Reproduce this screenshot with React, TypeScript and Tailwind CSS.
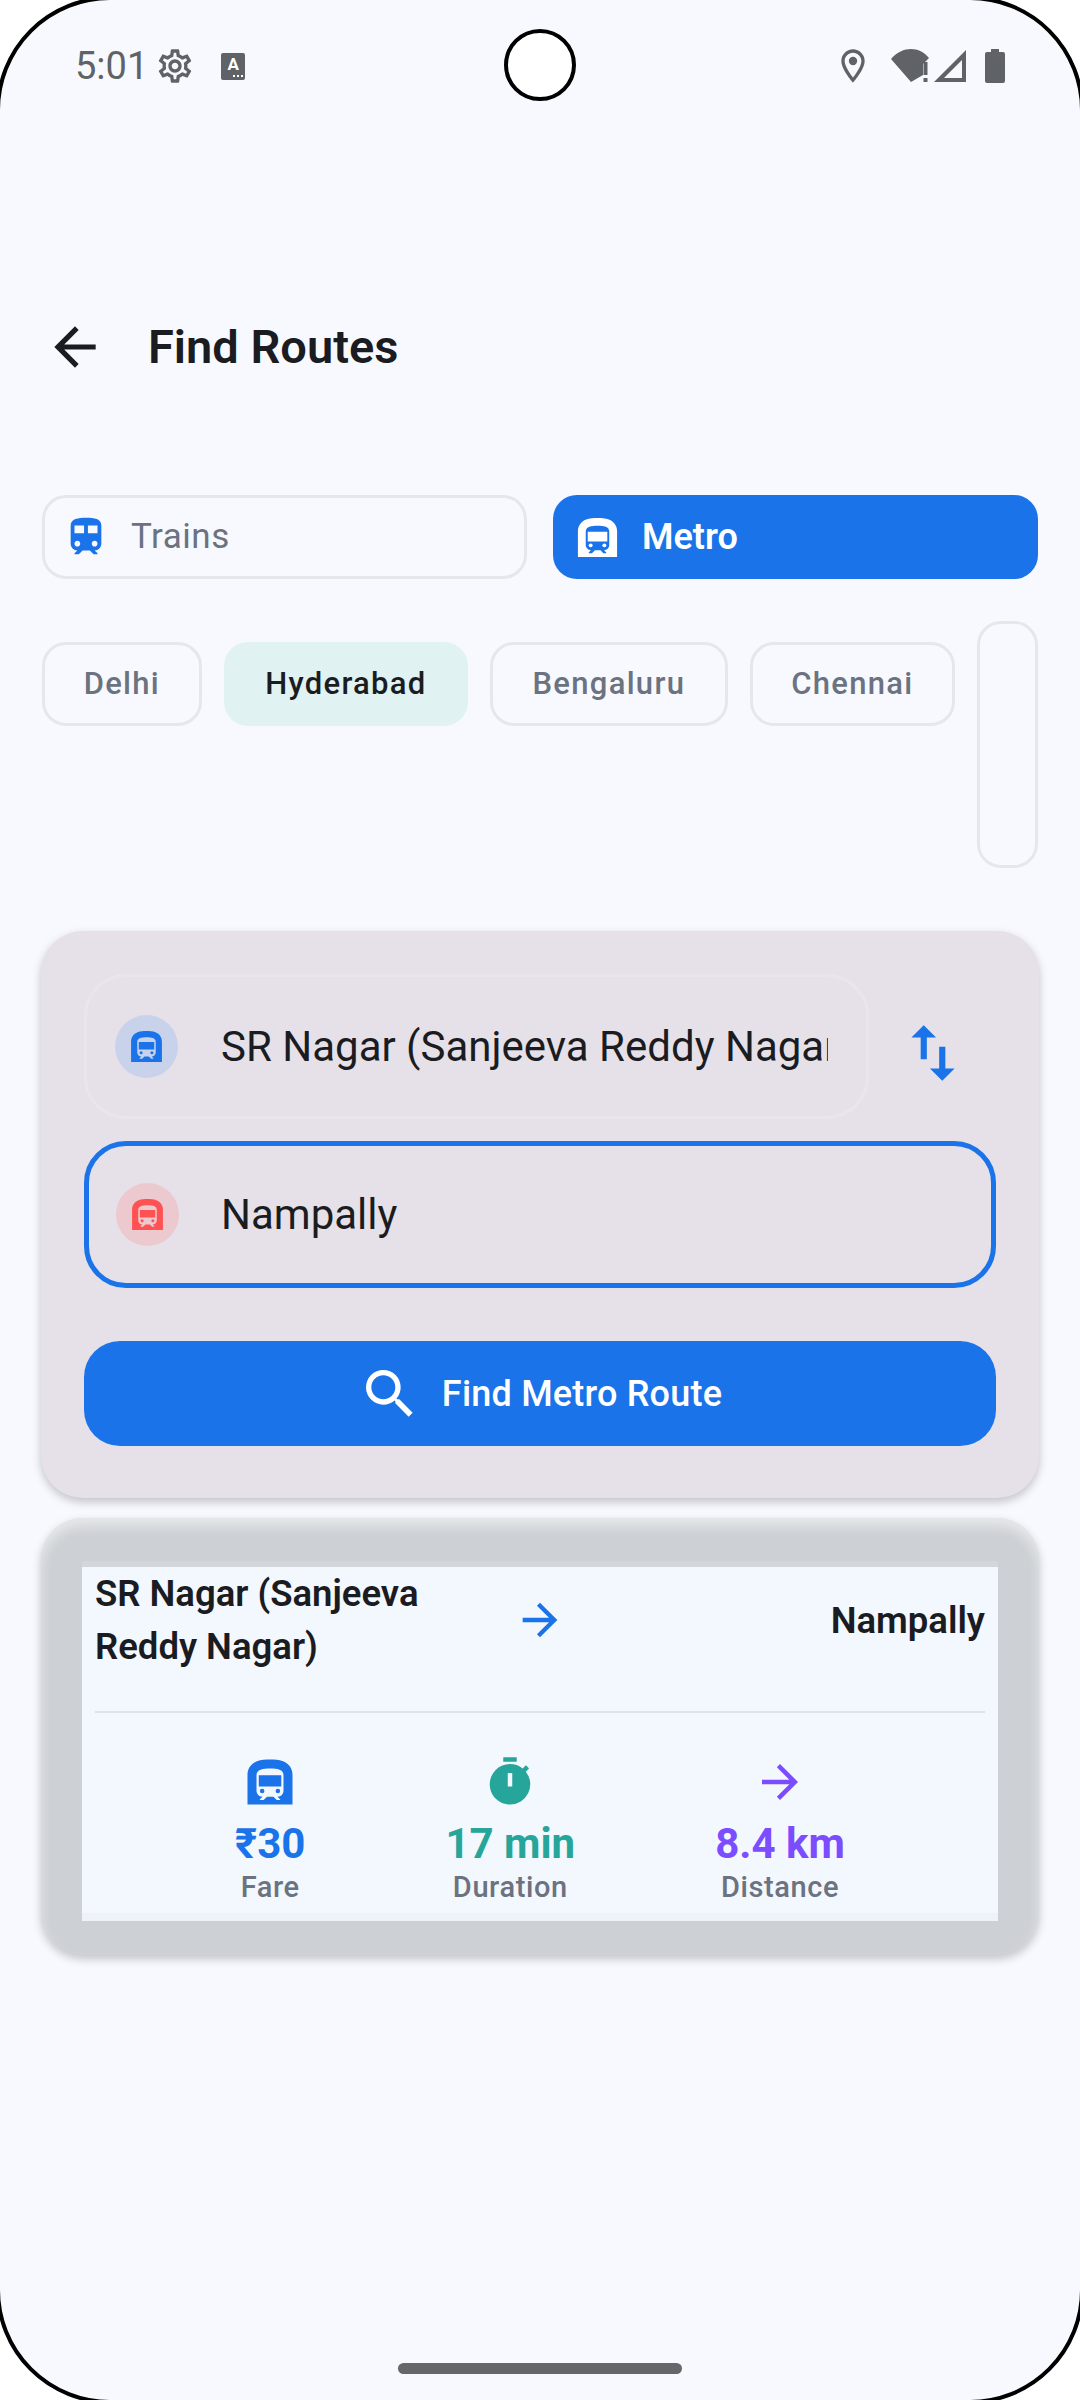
import { MdArrowBack, MdArrowForward, MdOutlineLocationOn, MdOutlineSettings, MdSearch, MdSubway, MdSwapVert, MdTimer, MdTrain } from "react-icons/md";

const CITIES = [
  { name: "Delhi", width: "w-[160px]" },
  { name: "Hyderabad", width: "w-[245px]", active: true },
  { name: "Bengaluru", width: "w-[238px]" },
  { name: "Chennai", width: "w-[206px]" },
];

function StatusBar() {
  return (
    <div className="relative flex h-[132px] items-center justify-between pl-[75px] pr-[75px] text-[#5f6368]">
      <div className="flex items-center">
        <span className="text-[38px] leading-none">5:01</span>
        <MdOutlineSettings className="ml-[7px] text-[40px]" />
        <div className="relative ml-[26px] h-[27px] w-[24px] rounded-[2px] bg-[#5f6368] text-center text-[17px] font-bold leading-[22px] text-white">
          A
          <span className="absolute bottom-[3px] right-[2px] h-[2px] w-[10px] border-b-2 border-dotted border-white" />
        </div>
      </div>
      <div className="flex items-center">
        <MdOutlineLocationOn className="text-[40px]" />
        <svg viewBox="0 0 40 34" className="ml-[18px] h-[34px] w-[40px]" fill="#5f6368">
          <path d="M0 10 C6 3 13 0 20 0 C27 0 33 3 38 9 L32 15 L32 26 L20 33 Z" />
          <rect x="32.5" y="13" width="4" height="13" />
          <rect x="32.5" y="29" width="4" height="4" />
        </svg>
        <svg viewBox="0 0 32 32" className="ml-[3px] h-[32px] w-[32px]">
          <path fillRule="evenodd" fill="#5f6368" d="M32 0 V32 H0 Z M28 10 L10 28 H28 Z" />
        </svg>
        <svg viewBox="0 0 20 34" className="ml-[19px] h-[34px] w-[20px]" fill="#5f6368">
          <path d="M6 0 H14 V3 H18 Q20 3 20 5 V32 Q20 34 18 34 H2 Q0 34 0 32 V5 Q0 3 2 3 H6 Z" />
        </svg>
      </div>
      <div className="absolute left-[504px] top-[29px] h-[72px] w-[72px] rounded-full border-4 border-black bg-white" />
    </div>
  );
}

function TypeToggle() {
  return (
    <div className="mt-[103px] grid grid-cols-2 gap-[26px] px-[42px]">
      <button className="flex h-[84px] items-center rounded-[24px] border-[3px] border-[#e5e7eb] pl-[18px] text-[35px] tracking-[0.5px] text-[#6b7280]">
        <MdTrain className="text-[46px] text-[#1a73e8]" />
        <span className="ml-[22px]">Trains</span>
      </button>
      <button className="flex h-[84px] items-center rounded-[24px] bg-[#1a73e8] pl-[21px] text-[36px] font-semibold text-white">
        <MdSubway className="text-[47px]" />
        <span className="ml-[21px]">Metro</span>
      </button>
    </div>
  );
}

function CityChips() {
  return (
    <div className="mt-[42px] flex items-start gap-[22px] px-[42px]">
      {CITIES.map((city) => (
        <div
          key={city.name}
          className={`mt-[21px] flex h-[84px] items-center justify-center rounded-[24px] text-[31px] font-medium tracking-[1.3px] ${city.width} ${
            city.active ? "bg-[#e0f2f1] text-[#1a1c22]" : "border-[3px] border-[#e5e7eb] text-[#6b7280]"
          }`}
        >
          {city.name}
        </div>
      ))}
      <div className="h-[247px] w-[61px] rounded-[24px] border-[3px] border-[#e5e7eb]" />
    </div>
  );
}

function StationIcon({ circle, color }: { circle: string; color: string }) {
  return (
    <div className={`flex h-[63px] w-[63px] shrink-0 items-center justify-center rounded-full ${circle}`}>
      <MdSubway className={`text-[37px] ${color}`} />
    </div>
  );
}

function SearchCard() {
  return (
    <div className="mx-[41px] mt-[63px] rounded-[42px] bg-[#e6e1e8] px-[43px] pb-[52px] pt-[43px] shadow-[0_4px_10px_rgba(0,0,0,0.22)]">
      <div className="flex h-[145px] items-center">
        <div className="flex h-[145px] w-[785px] items-center rounded-[42px] border-[3px] border-[#e9e6eb] pl-[28px] pr-[38px]">
          <StationIcon circle="bg-[#c8d2ea]" color="text-[#1a73e8]" />
          <span className="ml-[43px] overflow-hidden whitespace-nowrap text-[42px] text-[#1a1c22]">SR Nagar (Sanjeeva Reddy Nagar)</span>
        </div>
        <MdSwapVert className="ml-[27px] mt-[12px] text-[74px] text-[#1a73e8]" />
      </div>
      <div className="mt-[22px] flex h-[147px] items-center rounded-[42px] border-[5px] border-[#1a73e8] pl-[27px]">
        <StationIcon circle="bg-[#ecc9cf]" color="text-[#ff5252]" />
        <span className="ml-[42px] text-[42px] text-[#1a1c22]">Nampally</span>
      </div>
      <button className="mt-[53px] flex h-[105px] w-full items-center justify-center rounded-[36px] bg-[#1a73e8] text-[36px] font-medium tracking-[0.2px] text-white">
        <MdSearch className="text-[64px]" />
        <span className="ml-[20px]">Find Metro Route</span>
      </button>
    </div>
  );
}

function Stat({ icon, value, label, color }: { icon: React.ReactNode; value: string; label: string; color: string }) {
  return (
    <div className="flex flex-col items-center">
      {icon}
      <span className={`mt-[10px] text-[42px] font-bold leading-[50px] ${color}`}>{value}</span>
      <span className="text-[29px] font-medium leading-[36px] tracking-[0.6px] text-[#6b7280]">{label}</span>
    </div>
  );
}

function ResultCard() {
  return (
    <div className="mx-[41px] mt-[20px] rounded-[42px] bg-[#cdd1d5] px-[41px] pb-[34px] pt-[43px] shadow-[0_4px_10px_rgba(0,0,0,0.22),inset_0_8px_12px_rgba(255,255,255,0.5)]">
      <div className="h-[360px] border-y-[6px] border-b-[8px] border-t-[#d3d7db] border-b-[#eff3f9] bg-[#f3f7fe] px-[13px] font-semibold text-[#1a1c22]">
        <div className="flex items-center text-[36.5px] leading-[53px]">
          <span className="flex-1">SR Nagar (Sanjeeva Reddy Nagar)</span>
          <MdArrowForward className="mx-[4px] text-[52px] text-[#1a73e8]" />
          <span className="flex-1 text-right">Nampally</span>
        </div>
        <div className="mt-[38px] h-[2px] bg-[#dfe2e8]" />
        <div className="mt-[42px] flex justify-evenly">
          <Stat icon={<MdSubway className="text-[54px] text-[#1a73e8]" />} value="₹30" label="Fare" color="text-[#1a73e8]" />
          <Stat icon={<MdTimer className="text-[54px] text-[#26a69a]" />} value="17 min" label="Duration" color="text-[#26a69a]" />
          <Stat icon={<MdArrowForward className="text-[54px] text-[#7c4dff]" />} value="8.4 km" label="Distance" color="text-[#7c4dff]" />
        </div>
      </div>
    </div>
  );
}

export default function App() {
  return (
    <div className="h-[2400px] w-[1080px] overflow-hidden bg-white" style={{ fontFamily: "Roboto, sans-serif" }}>
      <div className="relative -m-[4px] h-[2408px] w-[1088px] overflow-hidden rounded-[114px] border-4 border-black bg-[#f8f9fe]">
        <StatusBar />
        <div className="mt-[170px] flex h-[90px] items-center pl-[44px]">
          <MdArrowBack className="text-[62px] text-[#1a1c22]" />
          <h1 className="ml-[42px] text-[47px] font-semibold text-[#1a1c22]">Find Routes</h1>
        </div>
        <TypeToggle />
        <CityChips />
        <SearchCard />
        <ResultCard />
        <div className="absolute bottom-[26px] left-[398px] h-[11px] w-[284px] rounded-full bg-[#666769]" />
      </div>
    </div>
  );
}
